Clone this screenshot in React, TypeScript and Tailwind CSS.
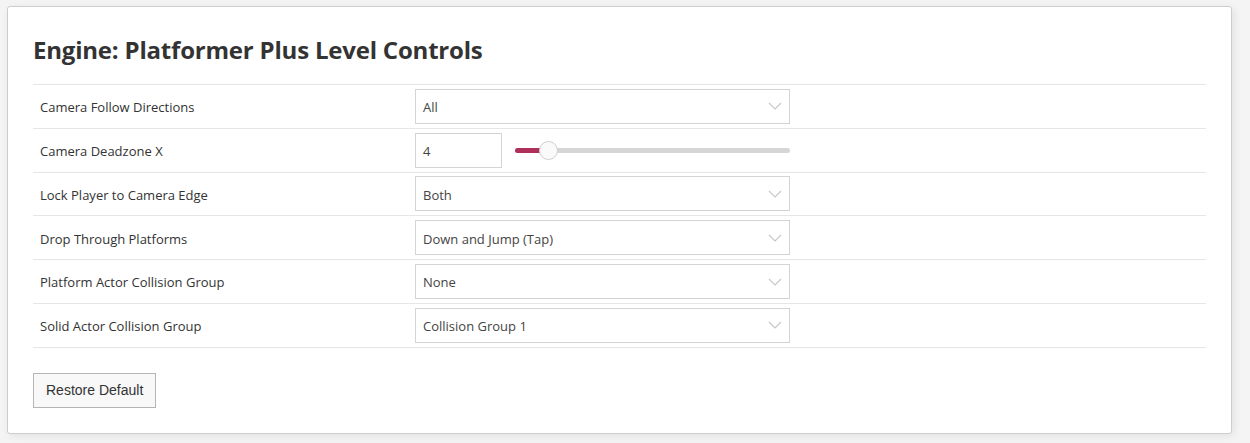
const rows: { label: string; kind: 'select' | 'slider'; value: string }[] = [
  { label: 'Camera Follow Directions', kind: 'select', value: 'All' },
  { label: 'Camera Deadzone X', kind: 'slider', value: '4' },
  { label: 'Lock Player to Camera Edge', kind: 'select', value: 'Both' },
  { label: 'Drop Through Platforms', kind: 'select', value: 'Down and Jump (Tap)' },
  { label: 'Platform Actor Collision Group', kind: 'select', value: 'None' },
  { label: 'Solid Actor Collision Group', kind: 'select', value: 'Collision Group 1' },
];

function Chevron() {
  return (
    <svg width="14" height="8" viewBox="0 0 14 8" fill="none" className="text-[#c8c8c8]">
      <path d="M1 1l6 6 6-6" stroke="currentColor" strokeWidth="1.2" />
    </svg>
  );
}

function SelectBox({ value }: { value: string }) {
  return (
    <div className="flex h-[35px] w-[375px] items-center justify-between border border-[#d4d4d4] bg-white pl-[7px] pr-[7px] text-[13px] text-[#444]">
      <span className="pt-[3px]">{value}</span>
      <Chevron />
    </div>
  );
}

function SliderControl({ value }: { value: string }) {
  return (
    <div className="flex items-center">
      <div className="flex h-[35px] w-[87px] items-center border border-[#d4d4d4] bg-white pl-[7px] pt-[3px] text-[13px] text-[#444]">
        {value}
      </div>
      <div className="relative ml-[13px] h-[5px] w-[275px] rounded-full bg-[#d6d6d6]">
        <div className="h-[5px] w-[30px] rounded-full bg-[#b0305c]" />
        <div className="absolute left-[24px] top-[-7px] h-[19px] w-[19px] rounded-full border border-[#cfcfcf] bg-[#fafafa]" />
      </div>
    </div>
  );
}

export default function App() {
  return (
    <div className="min-h-[443px] bg-[#f4f4f4] pl-[7px] pr-[18px] pt-[6px] font-['Open_Sans','Noto_Sans',sans-serif] text-[#333]">
      <div className="rounded-[3px] border border-[#cdcdcd] bg-white px-[25px] pb-[25px] pt-[26px] shadow-[2px_2px_8px_rgba(0,0,0,0.08)]">
        <h1 className="mb-[17px] text-[24px] font-bold leading-[34px] tracking-[-0.2px] text-[#333]">
          Engine: Platformer Plus Level Controls
        </h1>
        <div className="border-b border-[#e6e6e6]">
          {rows.map((r) => (
            <div key={r.label} className="flex h-[43.8px] items-center border-t border-[#e6e6e6]">
              <div className="w-[382px] pl-[7px] pt-[3px] text-[13px] text-[#333]">{r.label}</div>
              {r.kind === 'select' ? <SelectBox value={r.value} /> : <SliderControl value={r.value} />}
            </div>
          ))}
        </div>
        <button className="mt-[25px] h-[35px] border border-[#b5b5b5] bg-[#f8f8f8] px-[12px] font-['Liberation_Sans',Arial,sans-serif] text-[14px] text-[#333]">
          Restore Default
        </button>
      </div>
    </div>
  );
}
